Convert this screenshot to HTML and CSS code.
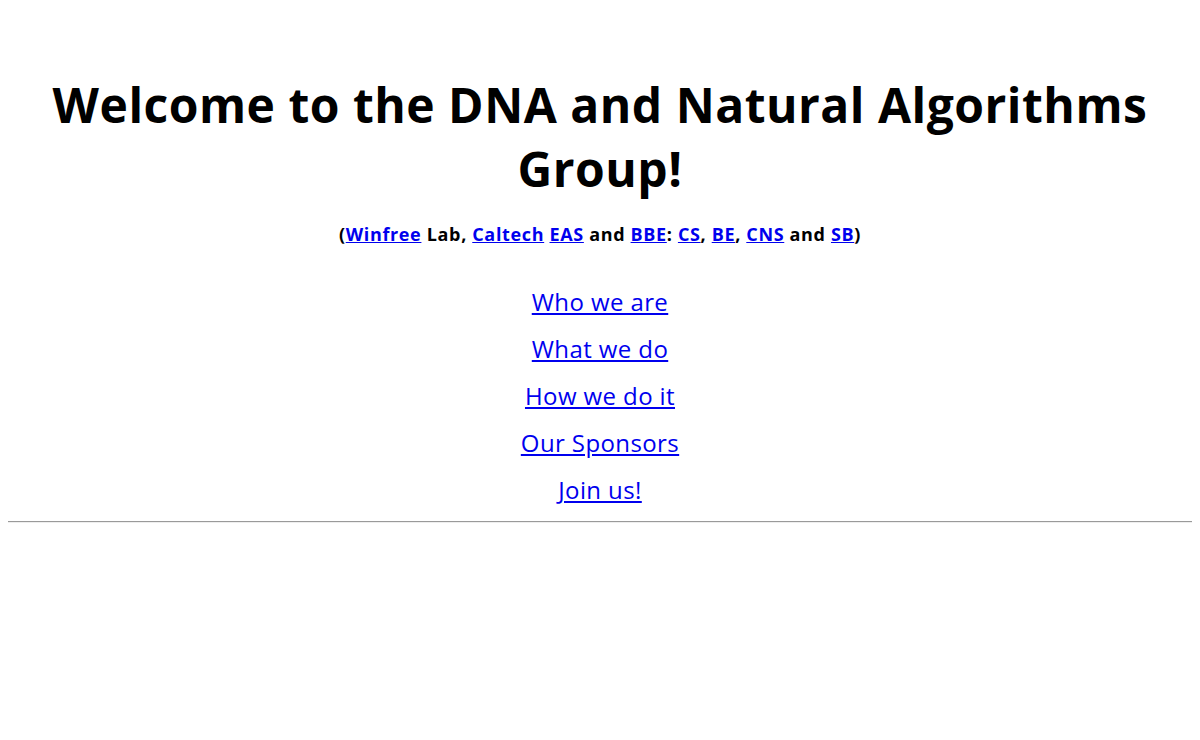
FILE: index.html
```html
<!DOCTYPE html>
<html>
<head>
<meta charset="utf-8">
<title>DNA and Natural Algorithms Group</title>
<link rel="stylesheet" href="styles.css">
</head>
<body>
<h1 class="title">Welcome to the DNA and Natural Algorithms Group!</h1>
<p class="affil">(<a href="#">Winfree</a> Lab, <a href="#">Caltech</a> <a href="#">EAS</a> and <a href="#">BBE</a>: <a href="#">CS</a>, <a href="#">BE</a>, <a href="#">CNS</a> and <a href="#">SB</a>)</p>
<nav class="menu">
  <a href="#">Who we are</a>
  <a href="#">What we do</a>
  <a href="#">How we do it</a>
  <a href="#">Our Sponsors</a>
  <a href="#">Join us!</a>
</nav>
<hr class="rule">
</body>
</html>
```
FILE: styles.css
```css
body {
  margin: 8px;
  font-family: "Open Sans", "Noto Sans", sans-serif;
  color: #000;
  background: #fff;
}
a { color: #0000ee; }
.title {
  margin: 65px 0 0;
  font-size: 48px;
  line-height: 64px;
  font-weight: 700;
  letter-spacing: 0.5px;
  text-align: center;
}
.affil {
  margin: 21px 0 0;
  font-size: 18px;
  line-height: 24px;
  font-weight: 700;
  letter-spacing: 0.65px;
  text-align: center;
}
.menu {
  margin-top: 40px;
  display: flex;
  flex-direction: column;
  align-items: center;
  gap: 15px;
}
.menu a {
  font-size: 24px;
  line-height: 32px;
  letter-spacing: 0.4px;
}
.rule {
  margin: 15px 0 0;
  border: none;
  border-top: 1px solid #9a9a9a;
  border-bottom: 1px solid #eee;
}
```
